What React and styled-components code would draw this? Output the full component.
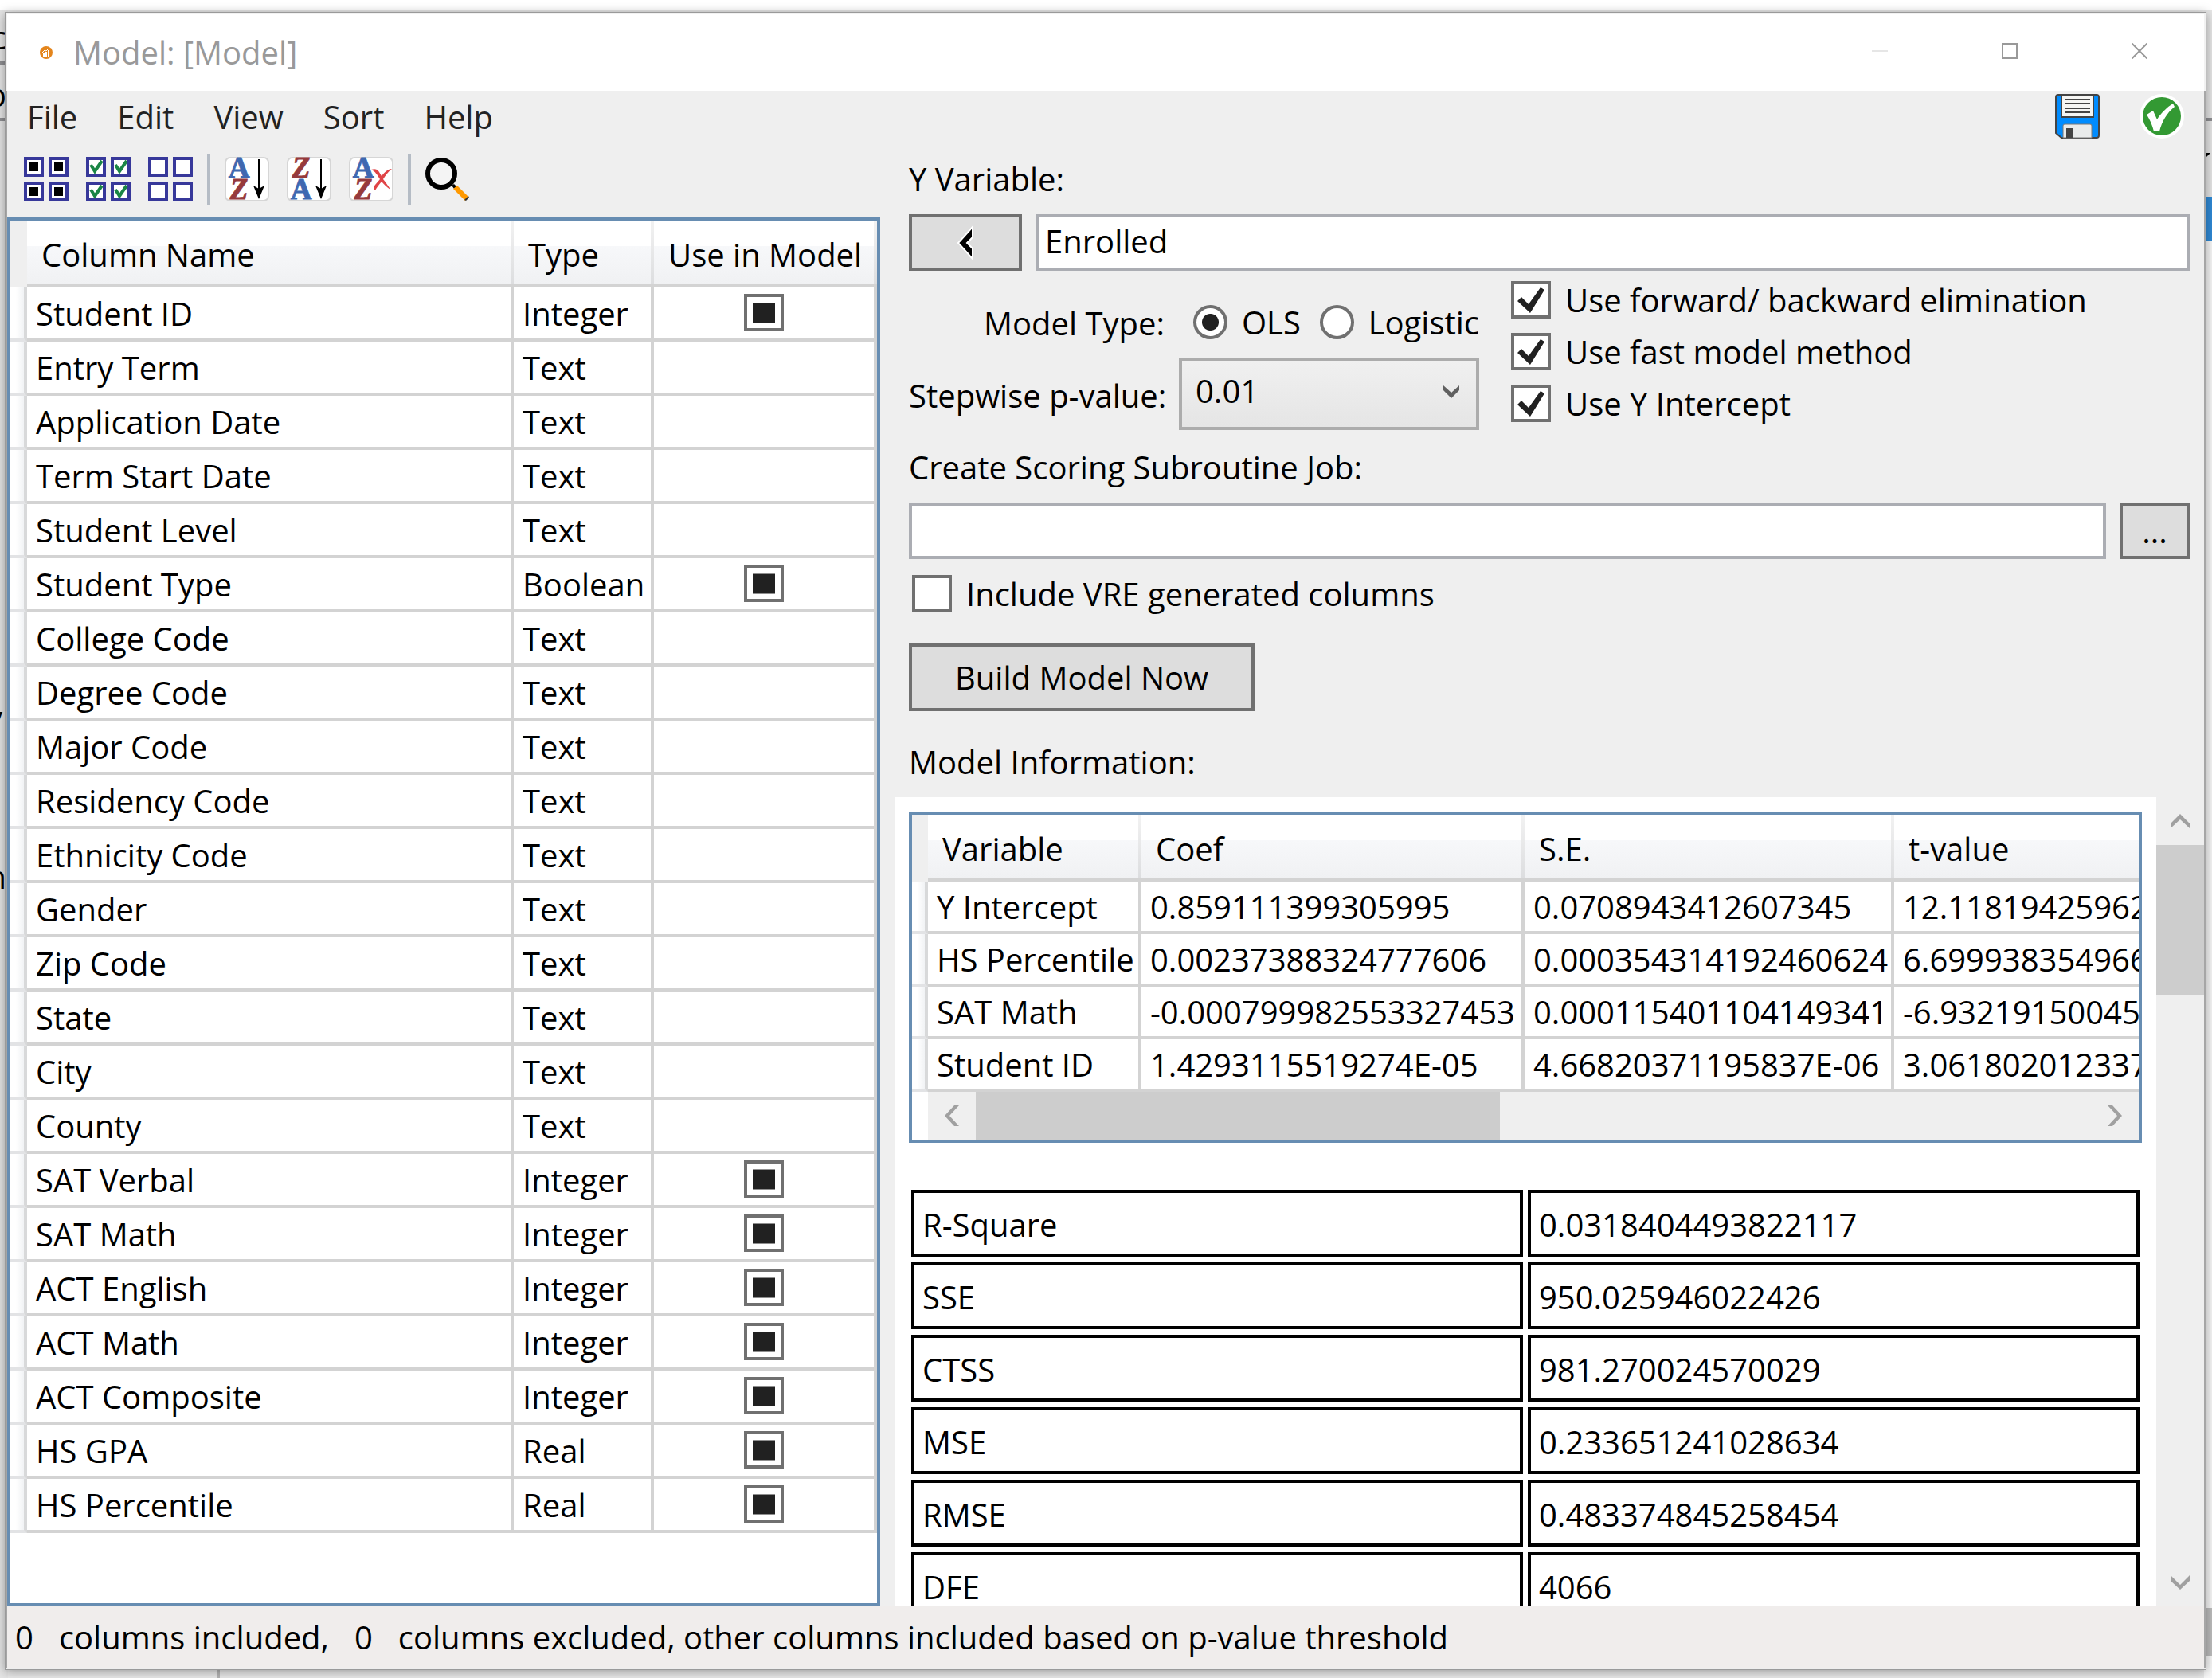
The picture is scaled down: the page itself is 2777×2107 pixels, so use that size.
import { useState } from 'react';
import styled, { createGlobalStyle } from 'styled-components';

const columns = [
  { name: 'Student ID', type: 'Integer', used: true },
  { name: 'Entry Term', type: 'Text' },
  { name: 'Application Date', type: 'Text' },
  { name: 'Term Start Date', type: 'Text' },
  { name: 'Student Level', type: 'Text' },
  { name: 'Student Type', type: 'Boolean', used: true },
  { name: 'College Code', type: 'Text' },
  { name: 'Degree Code', type: 'Text' },
  { name: 'Major Code', type: 'Text' },
  { name: 'Residency Code', type: 'Text' },
  { name: 'Ethnicity Code', type: 'Text' },
  { name: 'Gender', type: 'Text' },
  { name: 'Zip Code', type: 'Text' },
  { name: 'State', type: 'Text' },
  { name: 'City', type: 'Text' },
  { name: 'County', type: 'Text' },
  { name: 'SAT Verbal', type: 'Integer', used: true },
  { name: 'SAT Math', type: 'Integer', used: true },
  { name: 'ACT English', type: 'Integer', used: true },
  { name: 'ACT Math', type: 'Integer', used: true },
  { name: 'ACT Composite', type: 'Integer', used: true },
  { name: 'HS GPA', type: 'Real', used: true },
  { name: 'HS Percentile', type: 'Real', used: true },
];

const coefficients = [
  ['Y Intercept', '0.859111399305995', '0.0708943412607345', '12.11819425962'],
  ['HS Percentile', '0.00237388324777606', '0.000354314192460624', '6.699938354966'],
  ['SAT Math', '-0.000799982553327453', '0.000115401104149341', '-6.93219150045'],
  ['Student ID', '1.4293115519274E-05', '4.66820371195837E-06', '3.061802012337'],
];

const metrics = [
  ['R-Square', '0.0318404493822117'],
  ['SSE', '950.025946022426'],
  ['CTSS', '981.270024570029'],
  ['MSE', '0.233651241028634'],
  ['RMSE', '0.483374845258454'],
  ['DFE', '4066'],
];

const markIndeterminate = (el) => {
  if (el) el.indeterminate = true;
};

const cells = [
  [2, 2],
  [33, 2],
  [2, 33],
  [33, 33],
];

const GridIcon = ({ mark }) => (
  <svg width="56" height="56" viewBox="0 0 56 56" aria-hidden="true">
    {cells.map(([x, y]) => (
      <g key={`${x}-${y}`} transform={`translate(${x} ${y})`}>
        <rect width="21" height="21" fill="#fff" stroke="#37389a" strokeWidth="4" />
        {mark === 'square' && <rect x="5" y="5" width="11" height="11" fill="#000" />}
        {mark === 'check' && (
          <path d="M4 8l5 8 9-13" fill="none" stroke="#1a8545" strokeWidth="4" />
        )}
      </g>
    ))}
  </svg>
);

const SortIcon = ({ top, bottom, clear }) => {
  const fill = { A: '#3f68b0', Z: '#963a3c' };
  const letter = (value, y) => (
    <text
      x="18"
      y={y}
      textAnchor="middle"
      fill={fill[value]}
      stroke={fill[value]}
      strokeWidth="1"
      fontFamily='"Liberation Serif", serif'
      fontWeight="bold"
      fontStyle={value === 'Z' ? 'italic' : 'normal'}
      fontSize="37"
    >
      {value}
    </text>
  );
  return (
    <svg width="56" height="56" viewBox="0 0 56 56" aria-hidden="true">
      <rect x="1" y="1" width="54" height="54" rx="6" fill="#fff" stroke="#d6d6d6" strokeWidth="2" />
      {letter(top, 26)}
      {letter(bottom, 53)}
      {clear ? (
        <path
          d="M28 16c8-3 10 3 13 8 4-5 8-9 13-9-5 4-8 8-11 13 4 5 7 9 9 13-5-3-8-7-11-10-3 4-6 7-8 11-3-1-2-4 0-7l6-7c-3-5-6-10-11-12z"
          fill="#e04447"
        />
      ) : (
        <>
          <path d="M43 3v40" stroke="#000" strokeWidth="2" />
          <path d="M36 36l7 4 7-4-7 17z" fill="#000" />
        </>
      )}
    </svg>
  );
};

const SearchIcon = () => (
  <svg width="56" height="56" viewBox="0 0 56 56" aria-hidden="true">
    <path d="M33 36l3-2 3 3-2 4z" fill="#000" />
    <path d="M35 40l5-4 14 14-4 5z" fill="#f90" />
    <path d="M49 54l5-5 1 2-4 4z" fill="#333" />
    <circle cx="20" cy="21" r="17" fill="#f4f4f4" stroke="#000" strokeWidth="6" />
  </svg>
);

const SaveIcon = () => (
  <svg width="56" height="56" viewBox="0 0 56 56" aria-hidden="true">
    <path d="M4 1h48q3 0 3 3v48q0 3-3 3H8l-7-6V4q0-3 3-3z" fill="#008cff" stroke="#444" strokeWidth="2" />
    <path d="M8 1h40v28H8z" fill="#f5f5f3" stroke="#444" strokeWidth="2" />
    <path d="M12 7h32M12 12h32M12 18h32M12 23h32" stroke="#444" strokeWidth="2" />
    <path d="M10 55V40q0-2 2-2h32q2 0 2 2v15z" fill="#e9ebeb" stroke="#777" strokeWidth="1" />
    <path d="M14 43h9v12h-9z" fill="#444" />
  </svg>
);

const ApproveIcon = () => (
  <svg width="56" height="56" viewBox="0 0 56 56" aria-hidden="true">
    <circle cx="28" cy="28" r="28" fill="#fff" />
    <circle cx="28" cy="28" r="24" fill="#339933" />
    <path d="M9 26l8-5 5 11C27 24 34 17 42 12l2 4C34 24 28 35 25 47h-7C16 39 13 32 9 26z" fill="#fff" />
  </svg>
);

const AppIcon = () => (
  <svg width="16" height="16" viewBox="0 0 16 16" aria-hidden="true">
    <circle cx="8" cy="8" r="8" fill="#e4851c" />
    <path d="M4 13V9h2v4zM7 13V7h2v6zM10 13V5h2v8z" fill="#fff" />
    <path d="M3 8l3-3 2 1 4-4" fill="none" stroke="#fff" />
  </svg>
);

const arrows = {
  left: 'M18 0L6 13l12 13h-6L0 13 12 0z',
  right: 'M0 0l12 13L0 26h6l12-13L6 0z',
  up: 'M0 12L12 0l12 12v6L12 7 0 18z',
  down: 'M0 0l12 12L24 0v7L12 18 0 7z',
};

const ScrollArrow = ({ to }) => {
  const flat = to === 'up' || to === 'down';
  return (
    <svg width={flat ? 24 : 18} height={flat ? 18 : 26} aria-hidden="true">
      <path d={arrows[to]} fill="#a0a0a0" />
    </svg>
  );
};

const App = () => {
  const [yVariable, setYVariable] = useState('Enrolled');
  const [job, setJob] = useState('');

  return (
    <Desktop>
      <GlobalStyle />
      <Backdrop aria-hidden="true">
        <Strip $side="left">
          <Rule $top={77} />
          <Rule $top={148} />
          <Sliver $top={6}>c</Sliver>
          <Sliver $top={78}>p</Sliver>
          <Sliver $top={860} $right={7}>
            y
          </Sliver>
          <Sliver $top={1060}>n</Sliver>
        </Strip>
        <Strip $side="right">
          <Rule $top={148} />
          <Corner />
          <Selection />
          <Track />
        </Strip>
        <Divider />
      </Backdrop>

      <Window>
        <TitleBar>
          <AppIcon />
          <Title>Model: [Model]</Title>
          <WindowButton aria-label="Minimize">
            <svg width="20" height="20">
              <path d="M0 10h20" stroke="#e6e6e6" strokeWidth="2" />
            </svg>
          </WindowButton>
          <WindowButton aria-label="Maximize">
            <svg width="20" height="20">
              <path d="M1 1h18v18H1z" fill="none" stroke="#999" strokeWidth="2" />
            </svg>
          </WindowButton>
          <WindowButton aria-label="Close">
            <svg width="20" height="20">
              <path d="M0 0l20 20M20 0L0 20" stroke="#999" strokeWidth="2" />
            </svg>
          </WindowButton>
        </TitleBar>

        <Body>
          <LeftPane>
            <MenuBar>
              {['File', 'Edit', 'View', 'Sort', 'Help'].map((item) => (
                <MenuItem key={item}>{item}</MenuItem>
              ))}
            </MenuBar>
            <Toolbar>
              <IconButton aria-label="Threshold all">
                <GridIcon mark="square" />
              </IconButton>
              <IconButton aria-label="Include all">
                <GridIcon mark="check" />
              </IconButton>
              <IconButton aria-label="Exclude all">
                <GridIcon />
              </IconButton>
              <Separator />
              <IconButton aria-label="Sort ascending">
                <SortIcon top="A" bottom="Z" />
              </IconButton>
              <IconButton aria-label="Sort descending">
                <SortIcon top="Z" bottom="A" />
              </IconButton>
              <IconButton aria-label="Clear sort">
                <SortIcon top="A" bottom="Z" clear />
              </IconButton>
              <Separator />
              <IconButton aria-label="Find">
                <SearchIcon />
              </IconButton>
            </Toolbar>
            <ColumnList>
              <Grid>
                <colgroup>
                  <Col $width={21} />
                  <Col />
                  <Col $width={176} />
                  <Col $width={280} />
                </colgroup>
                <thead>
                  <tr>
                    <GridCorner />
                    <GridHead>Column Name</GridHead>
                    <GridHead>Type</GridHead>
                    <GridHead>Use in Model</GridHead>
                  </tr>
                </thead>
                <tbody>
                  {columns.map(({ name, type, used }) => (
                    <tr key={name}>
                      <RowHead />
                      <GridCell>{name}</GridCell>
                      <GridCell>{type}</GridCell>
                      <GridCell $center>
                        {used && (
                          <CheckBox ref={markIndeterminate} aria-label={`Use ${name} in model`} />
                        )}
                      </GridCell>
                    </tr>
                  ))}
                </tbody>
              </Grid>
            </ColumnList>
          </LeftPane>

          <RightPane>
            <Form onSubmit={(e) => e.preventDefault()}>
              <Actions>
                <IconButton type="button" aria-label="Save">
                  <SaveIcon />
                </IconButton>
                <IconButton type="button" aria-label="Accept">
                  <ApproveIcon />
                </IconButton>
              </Actions>

              <FieldLabel htmlFor="y-variable">Y Variable:</FieldLabel>
              <FieldRow>
                <PushButton type="button" aria-label="Use selected column" $width={142}>
                  <svg width="22" height="44" viewBox="0 0 22 44">
                    <path
                      d="M20 2v13l-7 7 7 7v13L2 22z"
                      fill="#000"
                      stroke="#fff"
                      strokeWidth="2"
                    />
                  </svg>
                </PushButton>
                <TextBox
                  id="y-variable"
                  value={yVariable}
                  onChange={(e) => setYVariable(e.target.value)}
                />
              </FieldRow>

              <Options>
                <Settings>
                  <SettingLabel as="span">Model Type:</SettingLabel>
                  <RadioGroup role="radiogroup" aria-label="Model Type">
                    <Choice>
                      <Radio name="model-type" defaultChecked />
                      OLS
                    </Choice>
                    <Choice>
                      <Radio name="model-type" />
                      Logistic
                    </Choice>
                  </RadioGroup>
                  <SettingLabel htmlFor="p-value">Stepwise p-value:</SettingLabel>
                  <SelectWrap>
                    <Select id="p-value" defaultValue="0.01">
                      <option>0.01</option>
                      <option>0.05</option>
                      <option>0.10</option>
                    </Select>
                    <Chevron width="20" height="16" aria-hidden="true">
                      <path d="M0 0l10 9L20 0v6L10 16 0 6z" fill="#606060" />
                    </Chevron>
                  </SelectWrap>
                </Settings>
                <Checks>
                  <Choice>
                    <CheckBox defaultChecked />
                    Use forward/ backward elimination
                  </Choice>
                  <Choice>
                    <CheckBox defaultChecked />
                    Use fast model method
                  </Choice>
                  <Choice>
                    <CheckBox defaultChecked />
                    Use Y Intercept
                  </Choice>
                </Checks>
              </Options>

              <FieldLabel htmlFor="job">Create Scoring Subroutine Job:</FieldLabel>
              <FieldRow>
                <TextBox id="job" value={job} onChange={(e) => setJob(e.target.value)} />
                <PushButton type="button" $width={88}>
                  ...
                </PushButton>
              </FieldRow>

              <IncludeRow>
                <Choice>
                  <CheckBox />
                  Include VRE generated columns
                </Choice>
              </IncludeRow>

              <BuildButton type="submit">Build Model Now</BuildButton>
              <InfoTitle>Model Information:</InfoTitle>
            </Form>

            <Results>
              <ResultsContent>
                <CoefBox>
                  <Grid $wide>
                    <colgroup>
                      <Col $width={20} />
                      <Col $width={268} />
                      <Col $width={481} />
                      <Col $width={464} />
                      <Col />
                    </colgroup>
                    <thead>
                      <tr>
                        <GridCorner />
                        <GridHead>Variable</GridHead>
                        <GridHead>Coef</GridHead>
                        <GridHead>S.E.</GridHead>
                        <GridHead $last>t-value</GridHead>
                      </tr>
                    </thead>
                    <tbody>
                      {coefficients.map((row) => (
                        <tr key={row[0]}>
                          <RowHead />
                          {row.map((value, i) => (
                            <GridCell key={value} $short $last={i === 3}>
                              {value}
                            </GridCell>
                          ))}
                        </tr>
                      ))}
                    </tbody>
                  </Grid>
                  <HorizontalBar>
                    <ScrollButton aria-label="Scroll left">
                      <ScrollArrow to="left" />
                    </ScrollButton>
                    <HorizontalTrack>
                      <HorizontalThumb />
                    </HorizontalTrack>
                    <ScrollButton aria-label="Scroll right">
                      <ScrollArrow to="right" />
                    </ScrollButton>
                  </HorizontalBar>
                </CoefBox>

                <Metrics>
                  <tbody>
                    {metrics.map(([name, value]) => (
                      <tr key={name}>
                        <MetricName>{name}</MetricName>
                        <MetricValue>{value}</MetricValue>
                      </tr>
                    ))}
                  </tbody>
                </Metrics>
              </ResultsContent>
              <VerticalBar>
                <ScrollButton aria-label="Scroll up">
                  <ScrollArrow to="up" />
                </ScrollButton>
                <VerticalTrack>
                  <VerticalThumb />
                </VerticalTrack>
                <ScrollButton aria-label="Scroll down">
                  <ScrollArrow to="down" />
                </ScrollButton>
              </VerticalBar>
            </Results>
          </RightPane>
        </Body>

        <StatusBar>
          <span>0</span>
          <span>columns included,</span>
          <span>0</span>
          <span>columns excluded, other columns included based on p-value threshold</span>
        </StatusBar>
      </Window>
    </Desktop>
  );
};

export default App;

const GlobalStyle = createGlobalStyle`
  * {
    box-sizing: border-box;
  }
  body {
    margin: 0;
  }
  body,
  button,
  input,
  select {
    color: #000;
    font-family: 'Open Sans', 'Noto Sans', sans-serif;
    font-size: 40px;
    line-height: 56px;
  }
  svg {
    display: block;
    flex: none;
  }
`;

const Desktop = styled.div`
  position: relative;
  display: flex;
  height: 100vh;
  padding: 15px 7px 10px 6px;
  overflow: hidden;
  background: linear-gradient(#fff 13px, #e8e8e8 13px);
`;

/* the program that shows around the edges of the dialog */
const Backdrop = styled.div`
  position: absolute;
  inset: 0;
`;

const Strip = styled.div`
  position: absolute;
  top: 13px;
  bottom: 0;
  ${({ $side }) => $side}: 0;
  width: 10px;
  overflow: hidden;
  background: ${({ $side }) =>
    $side === 'left' ? '#e4e4e4' : 'linear-gradient(#e6e6e6 234px, #f8f8f8 234px)'};
`;

const Rule = styled.div`
  position: absolute;
  top: ${({ $top }) => $top - 13}px;
  width: 100%;
  height: 4px;
  background: #8f8f92;
`;

const Sliver = styled.span`
  position: absolute;
  top: ${({ $top }) => $top}px;
  right: ${({ $right = 2 }) => $right}px;
`;

const Corner = styled.div`
  position: absolute;
  top: 179px;
  right: 2px;
  border-top: 8px solid #000;
  border-right: 8px solid transparent;
`;

const Selection = styled.div`
  position: absolute;
  top: 234px;
  width: 100%;
  height: 56px;
  background: #2f8ad6;
`;

const Track = styled.div`
  position: absolute;
  bottom: 28px;
  width: 100%;
  height: 60px;
  background: #bdbdbd;
`;

const Divider = styled.div`
  position: absolute;
  bottom: 0;
  left: 272px;
  width: 4px;
  height: 13px;
  background: #b4b4b4;
`;

const Window = styled.main`
  position: relative;
  display: flex;
  flex: 1;
  flex-direction: column;
  min-width: 0;
  padding: 2px;
  border: 1px solid #9a9a9a;
  background: linear-gradient(
    #f2f2f2 98px,
    #a6a6a6 98px,
    #a6a6a6 calc(100% - 2px),
    #eee calc(100% - 2px)
  );
  box-shadow: 0 2px 12px rgba(0, 0, 0, 0.35);
`;

const TitleBar = styled.header`
  display: flex;
  align-items: center;
  height: 96px;
  padding-left: 41px;
  background: #fff;
`;

const Title = styled.h1`
  flex: 1;
  margin: 0 0 0 26px;
  color: #999;
  font-size: 40px;
  font-weight: 400;
`;

const BareButton = styled.button`
  display: flex;
  align-items: center;
  justify-content: center;
  padding: 0;
  border: 0;
  background: none;
`;

const WindowButton = styled(BareButton)`
  width: 163px;
  height: 92px;
  align-self: flex-start;
`;

const Body = styled.div`
  display: grid;
  flex: 1;
  grid-template-columns: minmax(0, 1096fr) minmax(0, 1662fr);
  min-height: 0;
  background: #efefef;
`;

const LeftPane = styled.section`
  display: flex;
  flex-direction: column;
  min-height: 0;
`;

const MenuBar = styled.nav`
  display: flex;
  height: 66px;
`;

const MenuItem = styled(BareButton)`
  padding: 0 25px;
  color: #222;
`;

const Toolbar = styled.div`
  display: flex;
  gap: 22px;
  height: 93px;
  padding: 17px 21px;
`;

const IconButton = styled(BareButton)`
  width: 56px;
  height: 56px;
`;

const Separator = styled.span`
  width: 4px;
  height: 64px;
  margin: -4px -4px 0;
  background: #b5bcc5;
`;

const ColumnList = styled.div`
  flex: 1;
  min-height: 0;
  overflow: hidden;
  border: 4px solid #678db2;
  background: #fff;
`;

const Grid = styled.table`
  width: ${({ $wide }) => ($wide ? '120%' : '100%')};
  border-spacing: 0;
  table-layout: fixed;
`;

const Col = styled.col`
  width: ${({ $width }) => ($width ? `${$width}px` : 'auto')};
`;

const GridCorner = styled.td`
  padding: 0;
  background: #efefef;
`;

const GridHead = styled.th`
  height: 84px;
  padding: 6px 0 0 18px;
  border-bottom: 4px solid #d3d3d3;
  background:
    linear-gradient(#f2f2f2, #dcdddf) right / ${({ $last }) => ($last ? 0 : 4)}px 100% no-repeat,
    linear-gradient(#fff 40%, #f7f8fa 40%, #f0f1f3);
  font-weight: 400;
  text-align: left;
  white-space: nowrap;
`;

const GridCell = styled.td`
  height: ${({ $short }) => ($short ? 66 : 68)}px;
  padding: ${({ $center }) => ($center ? '0 0 8px' : '2px 0 0 11px')};
  border-right: ${({ $last }) => ($last ? 0 : 4)}px solid #d3d3d3;
  border-bottom: 4px solid #d3d3d3;
  line-height: 54px;
  text-align: ${({ $center }) => ($center ? 'center' : 'left')};
  white-space: nowrap;
`;

const RowHead = styled.td`
  padding: 0;
  border-right: 4px solid #d8d9da;
  border-bottom: 4px solid #e2e3e5;
  background: linear-gradient(90deg, #fff 40%, #f1f3f5);
`;

const CheckBox = styled.input.attrs({ type: 'checkbox' })`
  flex: none;
  width: 50px;
  height: 47px;
  margin: 0;
  border: 4px solid #707070;
  background: #fff;
  appearance: none;
  vertical-align: middle;

  &:checked::after,
  &:indeterminate::after {
    content: '';
    display: block;
    height: 100%;
    background: #212121;
  }
  &:checked::after {
    clip-path: polygon(4px 21px, 9px 16px, 18px 25px, 33px 4px, 38px 7px, 20px 36px);
  }
  &:indeterminate::after {
    clip-path: inset(7px);
  }
`;

const Radio = styled.input.attrs({ type: 'radio' })`
  flex: none;
  width: 43px;
  height: 43px;
  margin: 0;
  border: 4px solid #707070;
  border-radius: 50%;
  background: #fff;
  appearance: none;

  &:checked {
    background: radial-gradient(circle, #212121 10px, #fff 11px);
  }
`;

const RightPane = styled.section`
  display: flex;
  flex-direction: column;
  min-width: 0;
  min-height: 0;
`;

const Form = styled.form`
  display: flex;
  flex-direction: column;
  padding: 4px 18px 16px 36px;
`;

const Actions = styled.div`
  display: flex;
  gap: 50px;
  justify-content: flex-end;
  padding: 0 7px 4px 0;
`;

const FieldLabel = styled.label`
  margin: 19px 0 16px;
`;

const FieldRow = styled.div`
  display: flex;
  gap: 17px;
  height: 71px;
`;

const PushButton = styled.button`
  display: flex;
  flex: none;
  align-items: center;
  justify-content: center;
  width: ${({ $width }) => $width}px;
  padding: 0;
  border: 4px solid #707070;
  background: #ddd;
`;

const TextBox = styled.input`
  flex: 1;
  min-width: 0;
  padding: 0 8px 4px;
  border: 4px solid #abadb3;
  background: #fff;
`;

const Options = styled.div`
  display: flex;
  gap: 40px;
  align-items: flex-start;
  padding-top: 13px;
`;

const Settings = styled.div`
  display: grid;
  flex: none;
  grid-template-columns: 321px 377px;
  row-gap: 17px;
  column-gap: 18px;
  padding-top: 23px;
`;

const SettingLabel = styled.label`
  align-self: center;
  padding-top: 4px;
  line-height: 52px;
  text-align: right;
  white-space: nowrap;
`;

const RadioGroup = styled.div`
  display: flex;
  align-items: center;
  justify-content: space-between;
  padding-left: 18px;
`;

const Choice = styled.label`
  display: flex;
  gap: 18px;
  align-items: center;
  line-height: 47px;
  white-space: nowrap;
`;

const SelectWrap = styled.div`
  position: relative;
`;

const Select = styled.select`
  display: block;
  width: 100%;
  height: 91px;
  padding: 0 60px 8px 17px;
  border: 4px solid #acacac;
  border-radius: 0;
  background: linear-gradient(#f0f0f0, #e5e5e5);
  appearance: none;
`;

const Chevron = styled.svg`
  position: absolute;
  top: 35px;
  right: 25px;
  pointer-events: none;
`;

const Checks = styled.div`
  display: flex;
  flex-direction: column;
  gap: 18px;
`;

const IncludeRow = styled.div`
  display: flex;
  padding: 20px 0 0 4px;
`;

const BuildButton = styled(PushButton)`
  align-self: flex-start;
  width: auto;
  height: 85px;
  margin: 39px 0 36px;
  padding: 0 54px;
`;

const InfoTitle = styled.h2`
  margin: 0;
  font-size: 40px;
  font-weight: 400;
`;

const Results = styled.div`
  display: grid;
  flex: 1;
  grid-template-columns: minmax(0, 1fr) 60px;
  min-height: 0;
  margin-left: 18px;
`;

const ResultsContent = styled.div`
  min-height: 0;
  padding: 18px 18px 0;
  overflow: hidden;
  background: #fff;
`;

const CoefBox = styled.div`
  overflow: hidden;
  border: 4px solid #678db2;
`;

const HorizontalBar = styled.div`
  display: flex;
  height: 60px;
  margin-left: 20px;
  background: #efefef;
`;

const ScrollButton = styled(BareButton)`
  flex: none;
  width: 60px;
  height: 60px;
`;

const HorizontalTrack = styled.div`
  flex: 1;
`;

const HorizontalThumb = styled.div`
  width: 47%;
  height: 100%;
  background: #cdcdcd;
`;

const Metrics = styled.table`
  width: calc(100% + 6px);
  margin: 52px -3px 0;
  border-spacing: 6px 7px;
  table-layout: fixed;
`;

const MetricValue = styled.td`
  height: 84px;
  padding: 4px 10px 0;
  border: 4px solid #000;
`;

const MetricName = styled(MetricValue).attrs({ as: 'th', scope: 'row' })`
  font-weight: 400;
  text-align: left;
`;

const VerticalBar = styled.div`
  display: flex;
  flex-direction: column;
  min-height: 0;
  background: #efefef;
`;

const VerticalTrack = styled.div`
  flex: 1;
`;

const VerticalThumb = styled.div`
  height: 21%;
  background: #cdcdcd;
`;

const StatusBar = styled.footer`
  display: flex;
  gap: 32px;
  align-items: center;
  height: 77px;
  padding-left: 10px;
  background: #f0edec;
  white-space: nowrap;
`;
